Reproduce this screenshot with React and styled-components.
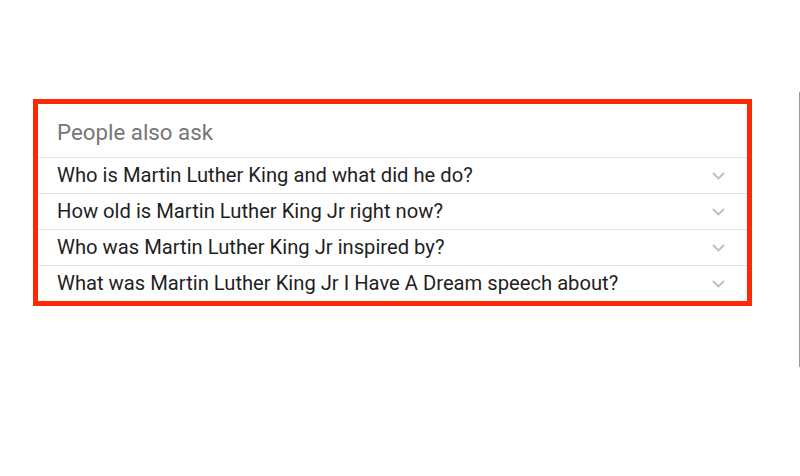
import React from "react";
import styled, { createGlobalStyle } from "styled-components";

const Global = createGlobalStyle`
  html, body { margin: 0; padding: 0; background: #ffffff; }
  body { font-family: Roboto, "Liberation Sans", Arial, sans-serif; }
`;

const Page = styled.div`
  display: flex;
  width: 800px;
  height: 476px;
  background: #ffffff;
`;

const Main = styled.main`
  flex: 1;
  padding: 99px 0 0 33px;
`;

const SideRule = styled.div`
  width: 1px;
  height: 275px;
  margin-top: 92px;
  background: #9a9a9a;
`;

const Card = styled.section`
  box-sizing: border-box;
  width: 719px;
  border: 5px solid #fe2a06;
  background: #ffffff;
  display: flex;
  flex-direction: column;
`;

const Header = styled.h2`
  box-sizing: border-box;
  margin: 0;
  height: 53px;
  padding: 3px 0 0 19px;
  display: flex;
  align-items: center;
  font-family: Roboto, "Liberation Sans", Arial, sans-serif;
  font-weight: 400;
  font-size: 22.3px;
  color: #767676;
`;

const Row = styled.div`
  box-sizing: border-box;
  height: 36px;
  border-top: 1px solid #e2e2e2;
  display: flex;
  align-items: center;
  justify-content: space-between;
  padding: 0 22px 0 19px;
`;

const Question = styled.span`
  font-size: 20.2px;
  color: #1f1f1f;
  line-height: 1;
`;

const Chevron = () => (
  <svg width="13" height="8" viewBox="0 0 13 8" fill="none">
    <polyline points="1,1 6.5,6.5 12,1" stroke="#bdbdbd" strokeWidth="1.8" />
  </svg>
);

const questions = [
  "Who is Martin Luther King and what did he do?",
  "How old is Martin Luther King Jr right now?",
  "Who was Martin Luther King Jr inspired by?",
  "What was Martin Luther King Jr I Have A Dream speech about?",
];

export default function App() {
  return (
    <>
      <Global />
      <Page>
        <Main>
          <Card>
            <Header>People also ask</Header>
            {questions.map((q) => (
              <Row key={q}>
                <Question>{q}</Question>
                <Chevron />
              </Row>
            ))}
          </Card>
        </Main>
        <SideRule />
      </Page>
    </>
  );
}
